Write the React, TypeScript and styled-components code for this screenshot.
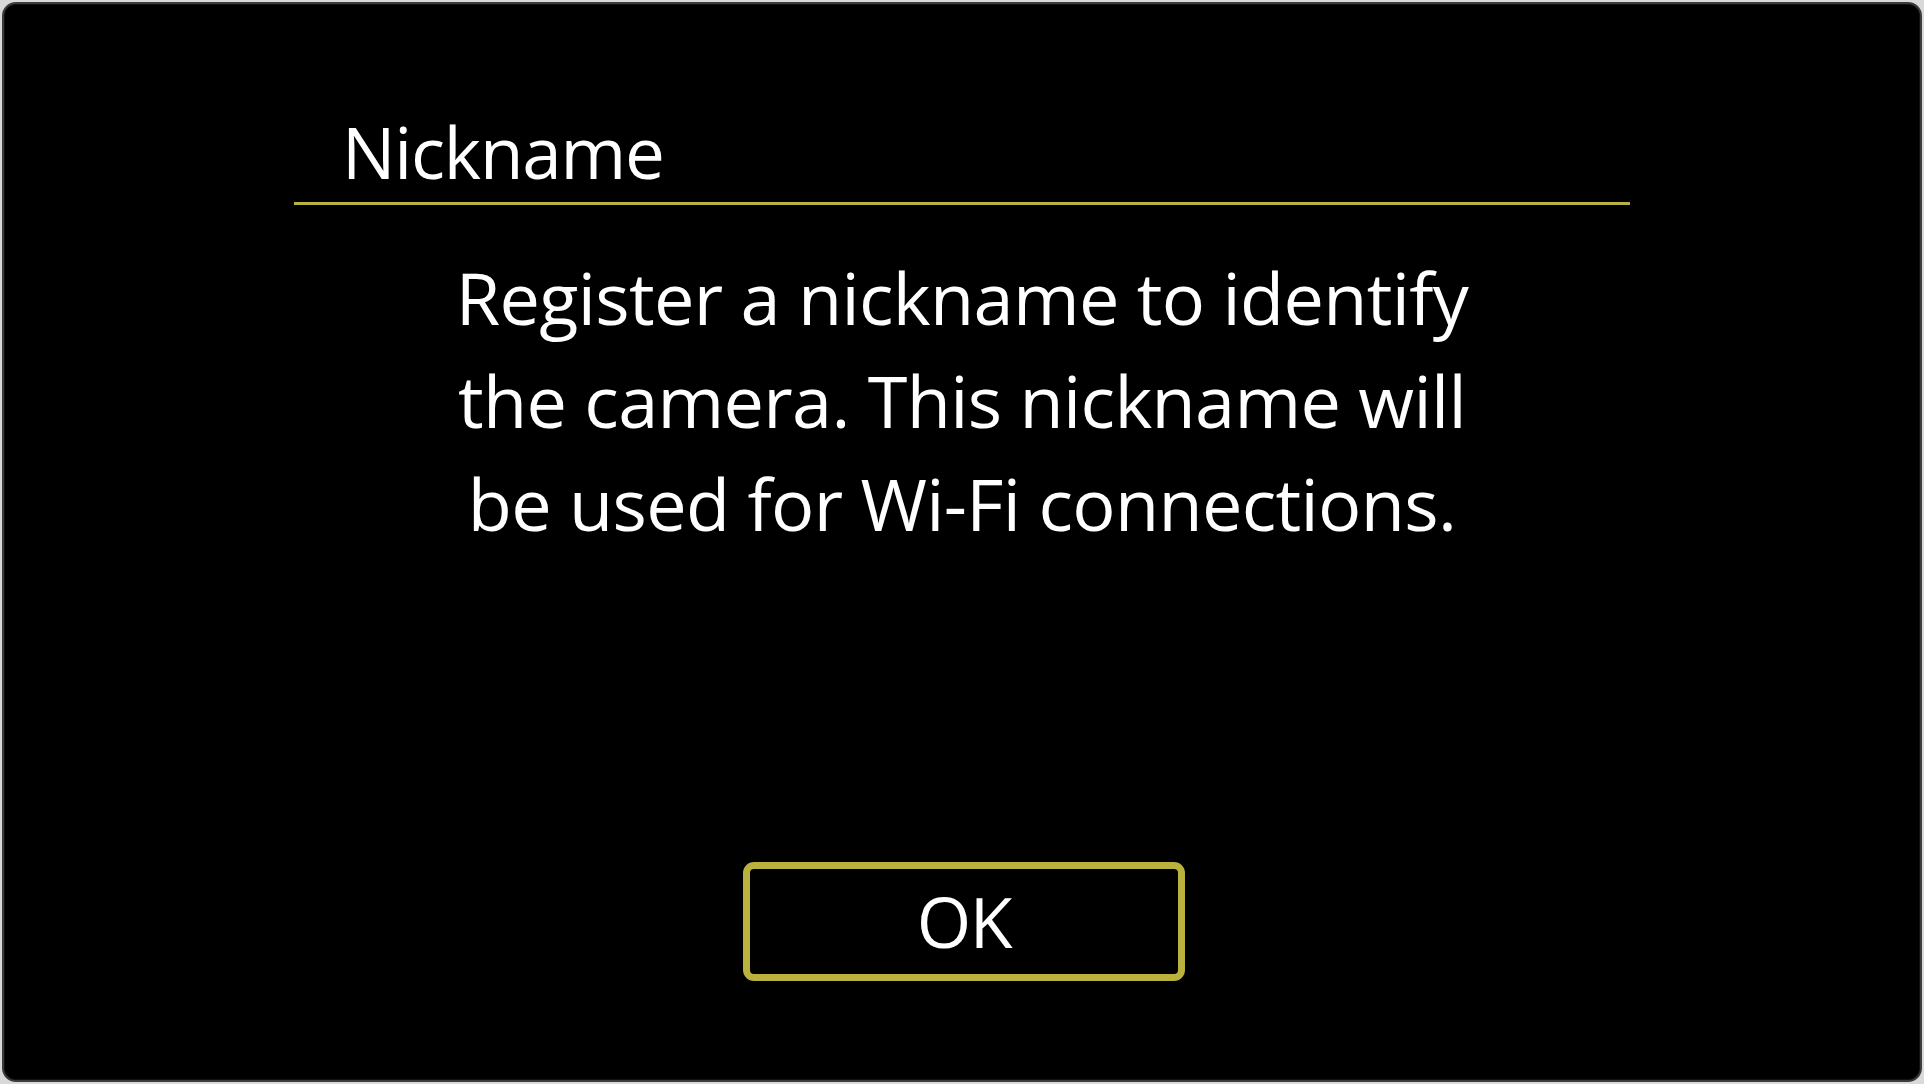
import styled, { createGlobalStyle } from 'styled-components';

const GlobalStyle = createGlobalStyle`
  html, body {
    margin: 0;
    padding: 0;
    background: #d9d9d9;
  }

  body {
    font-family: 'Open Sans', 'Noto Sans', sans-serif;
    -webkit-font-smoothing: antialiased;
  }
`;

const App = () => {
  return (
    <>
      <GlobalStyle />
      <Screen>
        <Header>
          <Title>Nickname</Title>
        </Header>

        <Message>
          Register a nickname to identify
          <br />
          the camera. This nickname will
          <br />
          be used for Wi-Fi connections.
        </Message>

        <Controller>
          <Button type="button">OK</Button>
        </Controller>
      </Screen>
    </>
  );
};

const Screen = styled.main`
  box-sizing: border-box;
  display: flex;
  flex-direction: column;
  align-items: center;
  width: 1920px;
  height: 1080px;
  margin: 2px;
  padding-top: 98px;
  border: 2px solid #3c3c3c;
  border-radius: 14px;
  background-color: #000;
  box-shadow: inset 0 0 0 1px #111;
  color: #fff;
  overflow: hidden;
`;

const Header = styled.header`
  width: 1336px;
  border-bottom: 3px solid #b9b140;
`;

const Title = styled.h1`
  margin: 0;
  padding-left: 48px;
  font-size: 71px;
  font-weight: 400;
  line-height: 100px;
  letter-spacing: -1.2px;
`;

const Message = styled.p`
  margin: 41px 0 0;
  font-size: 72px;
  font-weight: 400;
  line-height: 103px;
  letter-spacing: -0.65px;
  text-align: center;
`;

const Controller = styled.div`
  display: flex;
  justify-content: center;
  margin-top: 307px;
  padding-left: 4px;
`;

const Button = styled.button`
  box-sizing: border-box;
  width: 442px;
  height: 119px;
  padding: 0;
  border: 7px solid #bab23c;
  border-radius: 11px;
  background: #000;
  color: #fff;
  font-family: inherit;
  font-size: 70px;
  font-weight: 400;
  line-height: 105px;
  letter-spacing: -1.5px;
`;

export default App;
